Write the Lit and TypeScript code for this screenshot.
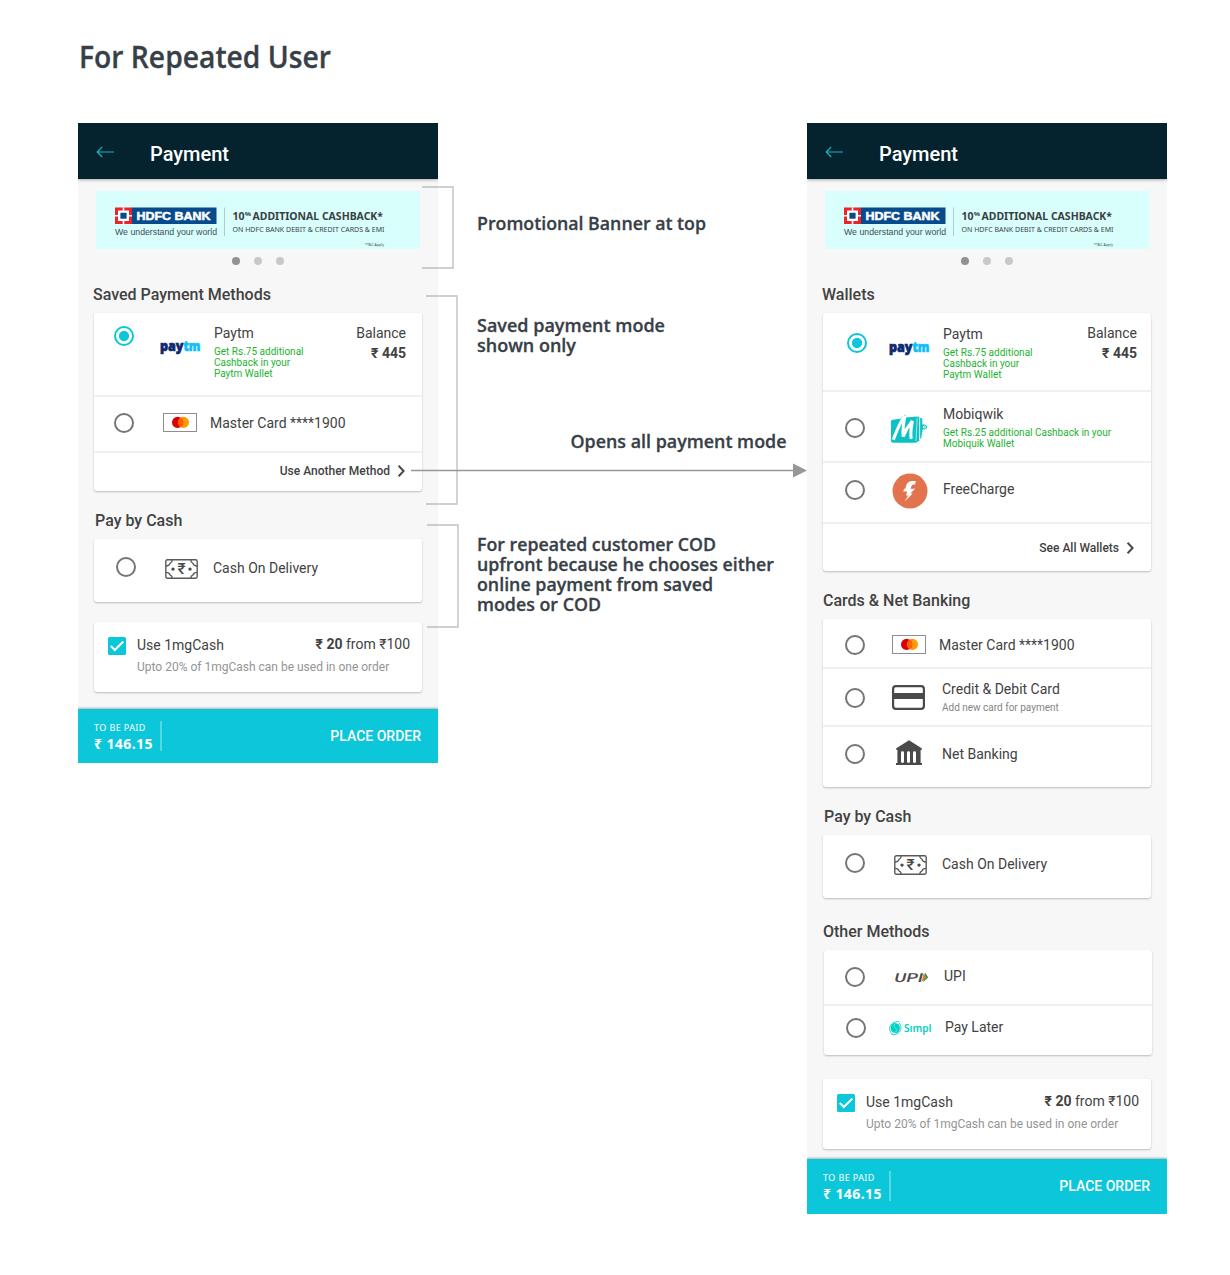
import { LitElement, html, css, svg, nothing } from "lit";
import { customElement, property } from "lit/decorators.js";

type Row = { kind: string; icon: string; name: string; note?: string[]; muted?: boolean; balance?: string; on?: boolean };
type Section = { kind: string; title: string; rows: Row[]; more?: string };

const paytm = (kind: string): Row => ({
  kind, icon: "paytm", name: "Paytm", balance: "₹ 445", on: true,
  note: ["Get Rs.75 additional", "Cashback in your", "Paytm Wallet"],
});

const savedSections: Section[] = [
  { kind: "saved", title: "Saved Payment Methods", more: "Use Another Method",
    rows: [paytm("paytm-saved"), { kind: "master-saved", icon: "master", name: "Master Card ****1900" }] },
  { kind: "cash", title: "Pay by Cash", rows: [{ kind: "cod", icon: "cash", name: "Cash On Delivery" }] },
];

const allSections: Section[] = [
  { kind: "wallets", title: "Wallets", more: "See All Wallets", rows: [
    paytm("paytm-all"),
    { kind: "mobi", icon: "mobi", name: "Mobiqwik", note: ["Get Rs.25 additional Cashback in your", "Mobiquik Wallet"] },
    { kind: "free", icon: "free", name: "FreeCharge" } ] },
  { kind: "cards", title: "Cards & Net Banking", rows: [
    { kind: "master-all", icon: "master", name: "Master Card ****1900" },
    { kind: "credit", icon: "credit", name: "Credit & Debit Card", note: ["Add new card for payment"], muted: true },
    { kind: "net", icon: "bank", name: "Net Banking" } ] },
  { kind: "cash", title: "Pay by Cash", rows: [{ kind: "cod", icon: "cash", name: "Cash On Delivery" }] },
  { kind: "other", title: "Other Methods", rows: [
    { kind: "upi", icon: "upi", name: "UPI" },
    { kind: "simpl", icon: "simpl", name: "Pay Later" } ] },
];

const icons: Record<string, unknown> = {
  paytm: html`<svg width="41" height="16" viewBox="0 0 41 16">
    <g font-family="Open Sans, sans-serif" font-weight="800" font-size="14.5" stroke-width=".7">
      <text x="0" y="9.8" textLength="23.500" lengthAdjust="spacingAndGlyphs" fill="#0b2a6f" stroke="#0b2a6f">pay</text>
      <text x="23.500" y="9.8" textLength="17" lengthAdjust="spacingAndGlyphs" fill="#12bdf8" stroke="#12bdf8">tm</text>
    </g></svg>`,
  master: html`<svg width="34" height="19" viewBox="0 0 34 19">
    <rect x=".5" y=".5" width="33" height="18" fill="#fff" stroke="#8e8e8e"/>
    <circle cx="20.4" cy="9.4" r="5.6" fill="#ff9a00"/><circle cx="14.6" cy="9.4" r="5.6" fill="#d90007"/>
    <path d="M17.5 4.6a5.6 5.6 0 0 1 0 9.6a5.6 5.6 0 0 1 0-9.6z" fill="#ff5f00"/></svg>`,
  cash: html`<svg width="33" height="20" viewBox="0 0 33 20" fill="none" stroke="#5a5a5a" stroke-width="1.4">
    <rect x=".8" y=".8" width="31.4" height="18.4" rx="1.6"/>
    <path d="M7.2 1c0 1.9-1 2.8-2.2 3.400-.4 1.700-1.600 2.600-4 2.600M1 13.400c2.400 0 3.500.9 4 2.400 1.300.6 2.200 1.600 2.200 3.200M25.800 1c0 1.900 1 2.800 2.200 3.400.4 1.700 1.600 2.600 4 2.600M32 13.400c-2.400 0-3.500.9-4 2.400-1.300.6-2.200 1.600-2.200 3.200"/>
    <g fill="#4a4a4a" stroke="none"><circle cx="8" cy="10.100" r="1.700"/><circle cx="25" cy="10.100" r="1.700"/>
    <text x="16.600" y="15.200" text-anchor="middle" font-family="Roboto, sans-serif" font-weight="500" font-size="15.500">₹</text></g></svg>`,
  mobi: html`<svg width="37" height="29" viewBox="0 0 37 29">
    <path d="M0 6.500Q0 4.800 1.700 4.700L9.500 3.800 12.200.8 14.500-.4 14.700 2.500 26.500 1.500 28.500 2V25.500L25 27.700H2Q0 27.700 0 25.700z" fill="#0cc2c4"/>
    <path d="M29 2.800 31.300 3.600V9.600H33.600C37 10.600 37 13.800 33.600 14.600H31.700L30.200 23 29 24z" fill="#0cc2c4"/>
    <path d="M2.300 24.700C5.300 16.500 9 7.500 13.700.8c-.9 7-2.400 14-1.500 20.700C14.500 15.500 17.500 10.500 21.300 6c-1 6-2.300 12-1 17.800" fill="none" stroke="#fff" stroke-width="3.100" stroke-linejoin="bevel"/>
    <path d="M26.200 2.500 25 26" stroke="#fff" stroke-width=".6"/>
    <path d="M28.700 2.500V25" stroke="#fff" stroke-width=".7"/>
    <circle cx="33.300" cy="12.100" r="1.500" fill="#fff"/><circle cx="33.400" cy="12.100" r=".6" fill="#0cc2c4"/></svg>`,
  free: html`<svg width="36" height="36" viewBox="0 0 36 36"><circle cx="18" cy="18" r="17.500" fill="#e2734d"/>
    <path d="M24 8.200c-4.300-.8-8.700-.1-9.800 4.300l-.8 3.200h-1.300l-.8 2.900h4L14 22.500h2.300l-3.900 6.200 8.300-8.100h-2.300l4.800-4.800h-4.700l1-2.500c.5-1.600 1.900-1.800 3.500-1.700z" fill="#fff"/></svg>`,
  credit: html`<svg width="33" height="25" viewBox="0 0 33 25"><rect x="1.100" y="1.100" width="30.800" height="22.800" rx="2.800" fill="none" stroke="#4a4a4a" stroke-width="2.200"/><rect x="1" y="8" width="31" height="6" fill="#4a4a4a"/></svg>`,
  bank: html`<svg width="26" height="25" viewBox="0 0 26 25"><path d="M13 .2 25.700 8.200v1.800H24.600V23H26v2H0v-2h1.400V10H.3V8.200z" fill="#4a4a4a"/>
    <g fill="#fff"><rect x="5" y="11.300" width="3" height="11.700" rx="1.400"/><rect x="11" y="11.300" width="3" height="11.700" rx="1.400"/><rect x="17" y="11.300" width="3" height="11.700" rx="1.400"/></g></svg>`,
  upi: html`<svg width="35" height="12" viewBox="0 0 35 12">
    <text transform="skewX(-14)" x="2" y="9.600" textLength="28.500" lengthAdjust="spacingAndGlyphs" font-family="Roboto, sans-serif" font-size="12.500" font-weight="500" fill="#4a4a4a">UPI</text>
    <path d="M31.300.8 34.200 5.400 29.100 10z" fill="#1a9a48"/><path d="M29.800.8 32.300 5.400 27.600 10z" fill="#ee7a1e"/></svg>`,
  simpl: html`<svg width="44" height="15" viewBox="0 0 44 15"><ellipse cx="6.300" cy="7" rx="4.600" ry="5.200" fill="#00d1c1"/>
    <path d="M10.300.7C5 .3.700 3 .7 7.500c0 2.600 1.200 4.800 3.200 6M2.600 13.500c4.900 1 9.300-2 9.300-6.600 0-2-.6-3.600-1.700-4.900" fill="none" stroke="#00d1c1" stroke-width=".9"/>
    <path d="M9.500 2.700C5.200 1.700 3.800 4.500 6.300 6.900s1.100 5.300-3.100 4.300" fill="none" stroke="#fff" stroke-width=".4"/>
    <text x="15" y="10.500" textLength="27.500" lengthAdjust="spacingAndGlyphs" font-family="Noto Sans, sans-serif" font-size="10" font-weight="600" fill="#00d1c1">Sımpl</text></svg>`,
};

const chevron = html`<svg class="chevron" width="8" height="12" viewBox="0 0 8 12"><path d="m1.600.7 5 5.300-5 5.300" fill="none" stroke="#4a4a4a" stroke-width="2"/></svg>`;

@customElement("promo-banner")
class PromoBanner extends LitElement {
  static styles = css`
    :host { display: flex; flex-direction: column; align-items: center; padding: 12px 18px 0; }
    .ad { display: block; background: #d9fffd; }
    .dots { display: flex; gap: 14px; padding: 8px 0 0; }
    .dot { width: 8px; height: 8px; border-radius: 50%; background: #c8c8c8; }
    .active { background: #929292; }
  `;
  render() {
    return html`<svg class="ad" width="324" height="58" viewBox="0 0 324 58">
      <rect x="35.500" y="16.500" width="85" height="16.500" fill="#074b8d"/>
      <rect x="19" y="16.500" width="17" height="16.500" fill="#ed232a"/>
      <path d="M27.500 16.500V33M19 24.700h17" stroke="#fff" stroke-width="1.600"/>
      <rect x="22" y="19.500" width="11" height="10.500" fill="#fff"/><rect x="24.400" y="21.800" width="6.200" height="5.900" fill="#074b8d"/>
      <text x="40.500" y="28.800" textLength="74" lengthAdjust="spacingAndGlyphs" font-family="Liberation Sans, sans-serif" font-weight="700" font-size="11.200" fill="#fff" stroke="#fff" stroke-width=".5">HDFC BANK</text>
      <text x="19" y="43.500" textLength="102" lengthAdjust="spacingAndGlyphs" font-family="Liberation Sans, sans-serif" font-size="9.500" fill="#3d4d55">We understand your world</text>
      <path d="M128.500 16.500v28.500" stroke="#b4c9cc"/>
      <g font-family="Noto Sans, sans-serif" fill="#383e42">
        <text x="136.500" y="29" textLength="12" lengthAdjust="spacingAndGlyphs" font-weight="700" font-size="11.300">10</text>
        <text x="148.700" y="25" textLength="6.300" lengthAdjust="spacingAndGlyphs" font-weight="700" font-size="6">%</text>
        <text x="156.500" y="29" textLength="130.500" lengthAdjust="spacingAndGlyphs" font-weight="700" font-size="11.300">ADDITIONAL CASHBACK*</text>
        <text x="136.500" y="40.500" textLength="152" lengthAdjust="spacingAndGlyphs" font-weight="400" font-size="7.400">ON HDFC BANK DEBIT &amp; CREDIT CARDS &amp; EMI</text>
        <text x="269" y="54.700" textLength="19" lengthAdjust="spacingAndGlyphs" font-size="3.600">*T&amp;C Apply</text>
      </g></svg>
      <div class="dots"><i class="dot active"></i><i class="dot"></i><i class="dot"></i></div>`;
  }
}

@customElement("payment-section")
class PaymentSection extends LitElement {
  @property({ attribute: false }) section!: Section;
  static styles = css`
    :host { display: block; }
    svg { overflow: visible; }
    .title { height: 29px; line-height: 22px; box-sizing: border-box; font-size: 16px; font-weight: 500; }
    .card { background: #fff; border-radius: 3px; box-shadow: 0 1px 2px rgba(0,0,0,.24); }
    .saved .title { padding-left: 15px; } .cash .title { padding-left: 17px; }
    .wallets .title { padding-left: 15px; } .cards .title, .other .title { padding-left: 16px; }
    .card { margin: 0 16px; }
    .other .card { margin: 0 15px 0 17px; }
    .row { display: grid; grid-template-columns: var(--icon) calc(var(--text) - var(--icon)) 1fr auto; align-items: start; height: var(--h); box-sizing: border-box; }
    .row:not(:last-child) { border-bottom: 2px solid #f0f0f0; }
    .radio { box-sizing: border-box; width: 20px; height: 20px; border: 2px solid #757575; border-radius: 50%; margin: var(--ry) 0 0 var(--rx, 22px); }
    .on { border-color: #0cc6da; background: radial-gradient(circle, #0cc6da 4.700px, #fff 5.400px); }
    .icon { margin-top: var(--iy); display: flex; }
    .label { margin-top: var(--ty); line-height: 20px; font-size: 14px; white-space: nowrap; }
    .note { margin-top: 3px; font-size: 10px; line-height: 11px; color: #1db230; }
    .muted { color: #858585; }
    .balance { margin-top: 10px; padding-right: var(--br); text-align: right; font-size: 14px; line-height: 20px; }
    .more { display: flex; justify-content: flex-end; align-items: center; gap: 7px; font-size: 12px; font-weight: 500; box-sizing: border-box; line-height: 16px; }
    .saved .more { height: 38px; padding: 0 17px 2px 0; }
    .wallets .more { height: 47px; padding: 0 17px 0 0; }
    .paytm-saved { --h: 84px; --rx: 20px; --ry: 13px; --icon: 66px; --iy: 28px; --text: 120px; --ty: 10px; --br: 16px; }
    .master-saved { --h: 56px; --rx: 20px; --ry: 16px; --icon: 69px; --iy: 16px; --text: 116px; --ty: 16px; }
    .cod { --h: 63px; --ry: 18px; --icon: 71px; --iy: 20px; --text: 119px; --ty: 19px; }
    .paytm-all { --h: 79px; --rx: 24px; --ry: 20px; --icon: 66px; --iy: 29px; --text: 120px; --ty: 11px; --br: 14px; }
    .mobi { --h: 71px; --ry: 26px; --icon: 68px; --iy: 23px; --text: 120px; --ty: 12px; }
    .free { --h: 61px; --ry: 17px; --icon: 69px; --iy: 10px; --text: 120px; --ty: 16px; }
    .master-all { --h: 50px; --ry: 16px; --icon: 69px; --iy: 16px; --text: 116px; --ty: 16px; }
    .credit { --h: 58px; --ry: 19px; --icon: 69px; --iy: 16px; --text: 119px; --ty: 10px; }
    .net { --h: 60px; --ry: 17px; --icon: 73px; --iy: 13px; --text: 119px; --ty: 17px; }
    .upi { --h: 56px; --rx: 21px; --ry: 17px; --icon: 70px; --iy: 22px; --text: 120px; --ty: 16px; }
    .simpl { --h: 49px; --ry: 12px; --icon: 65px; --iy: 15px; --text: 121px; --ty: 11px; }
  `;
  render() {
    const s = this.section;
    return html`<section class=${s.kind}>
      <div class="title">${s.title}</div>
      <div class="card">
        ${s.rows.map(r => html`<div class="row ${r.kind}">
          <span class="radio ${r.on ? "on" : ""}"></span>
          <span class="icon">${icons[r.icon]}</span>
          <div class="label">${r.name}${r.note ? html`<div class="note ${r.muted ? "muted" : ""}">${r.note.map(n => html`<div>${n}</div>`)}</div>` : nothing}</div>
          ${r.balance ? html`<div class="balance">Balance<br><b>${r.balance}</b></div>` : nothing}
        </div>`)}
        ${s.more ? html`<div class="more">${s.more}${chevron}</div>` : nothing}
      </div></section>`;
  }
}

@customElement("payment-phone")
class PaymentPhone extends LitElement {
  @property({ attribute: false }) sections: Section[] = [];
  @property() variant = "saved";
  static styles = css`
    :host { display: block; width: 360px; }
    .phone { background: #f7f7f7; display: flex; flex-direction: column; font-family: Roboto, sans-serif; color: #424242; }
    .saved { height: 640px; } .all { height: 1091px; }
    .bar { height: 56px; background: #04232e; display: flex; align-items: center; gap: 36px; padding-left: 18px; color: #fff; font-size: 20px; font-weight: 500; box-shadow: 0 1px 3px rgba(0,0,0,.3); clip-path: inset(0 0 -6px 0); }
    .bar svg { margin-top: 2px; }
    .bar span { padding-top: 6px; }
    .sections { display: flex; flex-direction: column; padding-top: 19px; gap: 19px; }
    .all payment-section:nth-child(4) { margin-top: 4px; }
    .credit { margin: 20px 16px 0; height: 70px; background: #fff; border-radius: 3px; box-shadow: 0 1px 2px rgba(0,0,0,.24); display: flex; padding: 13px 12px 0 14px; box-sizing: border-box; font-size: 14px; line-height: 20px; }
    .all .credit { margin-top: 24px; }
    .check { margin: 2px 11px 0 0; flex: none; }
    .use { flex: 1; white-space: nowrap; }
    .use div { font-size: 12px; line-height: 16px; margin-top: 4px; color: #949494; }
    .amount { margin: -1px 0 0 -150px; }
    .foot { margin-top: auto; height: 54px; background: #0cc6da; color: #fff; display: flex; align-items: center; box-shadow: 0 -1px 2px rgba(0,0,0,.3); clip-path: inset(-6px 0 0 0); padding: 0 17px 0 16px; box-sizing: border-box; }
    .all .foot { height: 55px; padding-bottom: 1px; }
    .paid { font: 9px/13px "Noto Sans", sans-serif; border-right: 2px solid rgba(255,255,255,.3); width: 66px; height: 30px; letter-spacing: .4px; white-space: nowrap; }
    .paid b { display: block; font-size: 14px; line-height: 20px; letter-spacing: .4px; }
    .place { margin-left: auto; font-size: 14px; font-weight: 500; }
  `;
  render() {
    return html`<div class="phone ${this.variant}">
      <div class="bar"><svg width="18" height="12" viewBox="0 0 18 12"><path d="M18 6H1.400M6.200.9 1.200 6l5 5" fill="none" stroke="#16b7be" stroke-width="1.200"/></svg><span>Payment</span></div>
      <promo-banner></promo-banner>
      <div class="sections">${this.sections.map(s => html`<payment-section .section=${s}></payment-section>`)}</div>
      <div class="credit">
        <svg class="check" width="18" height="18" viewBox="0 0 18 18"><rect width="18" height="18" rx="1.500" fill="#0cc6da"/><path d="m2.800 9 4 4 8.600-8.500" fill="none" stroke="#fff" stroke-width="2"/></svg>
        <div class="use">Use 1mgCash<div>Upto 20% of 1mgCash can be used in one order</div></div>
        <div class="amount"><b>₹ 20</b> from ₹100</div>
      </div>
      <div class="foot"><div class="paid">TO BE PAID<b>₹ 146.15</b></div><div class="place">PLACE ORDER</div></div>
    </div>`;
  }
}

const captions: [number, number, number, string][] = [
  [477, 230, 229, "Promotional Banner at top"],
  [477, 332, 188, "Saved payment mode"],
  [477, 352, 99, "shown only"],
  [570.5, 448, 216, "Opens all payment mode"],
  [477, 551, 239, "For repeated customer COD"],
  [477, 571, 297, "upfront because he chooses either"],
  [477, 591, 236, "online payment from saved"],
  [477, 611, 124, "modes or COD"],
];

@customElement("app-root")
class AppRoot extends LitElement {
  static styles = css`
    :host { display: block; background: #fff; }
    .board { position: relative; width: 1230px; height: 1275px; box-sizing: border-box; padding: 123px 63px 0 78px; display: flex; justify-content: space-between; align-items: flex-start; }
    .notes { position: absolute; inset: 0; }
    text { font-family: "Open Sans", "Noto Sans", sans-serif; font-weight: 600; fill: #384047; stroke: #384047; stroke-width: .3px; }
  `;
  render() {
    return html`<main class="board">
      <payment-phone variant="saved" .sections=${savedSections}></payment-phone>
      <payment-phone variant="all" .sections=${allSections}></payment-phone>
      <svg class="notes" width="1230" height="1275" viewBox="0 0 1230 1275">
        <text x="79" y="68" font-size="30" textLength="252" lengthAdjust="spacingAndGlyphs">For Repeated User</text>
        ${captions.map(([x, y, w, t]) => svg`<text x=${x} y=${y} font-size="18.500" textLength=${w} lengthAdjust="spacingAndGlyphs">${t}</text>`)}
        <path d="M422 187h31v81h-31M426 296h31v208h-31M427 525h31v102h-31" fill="none" stroke="#979797" stroke-opacity=".6" stroke-width="1.400"/>
        <path d="M411 470.500h384" stroke="#979797" stroke-width="1.600"/><path d="M793 463.500 807 470.500 793 477.500z" fill="#979797"/>
      </svg>
    </main>`;
  }
}
